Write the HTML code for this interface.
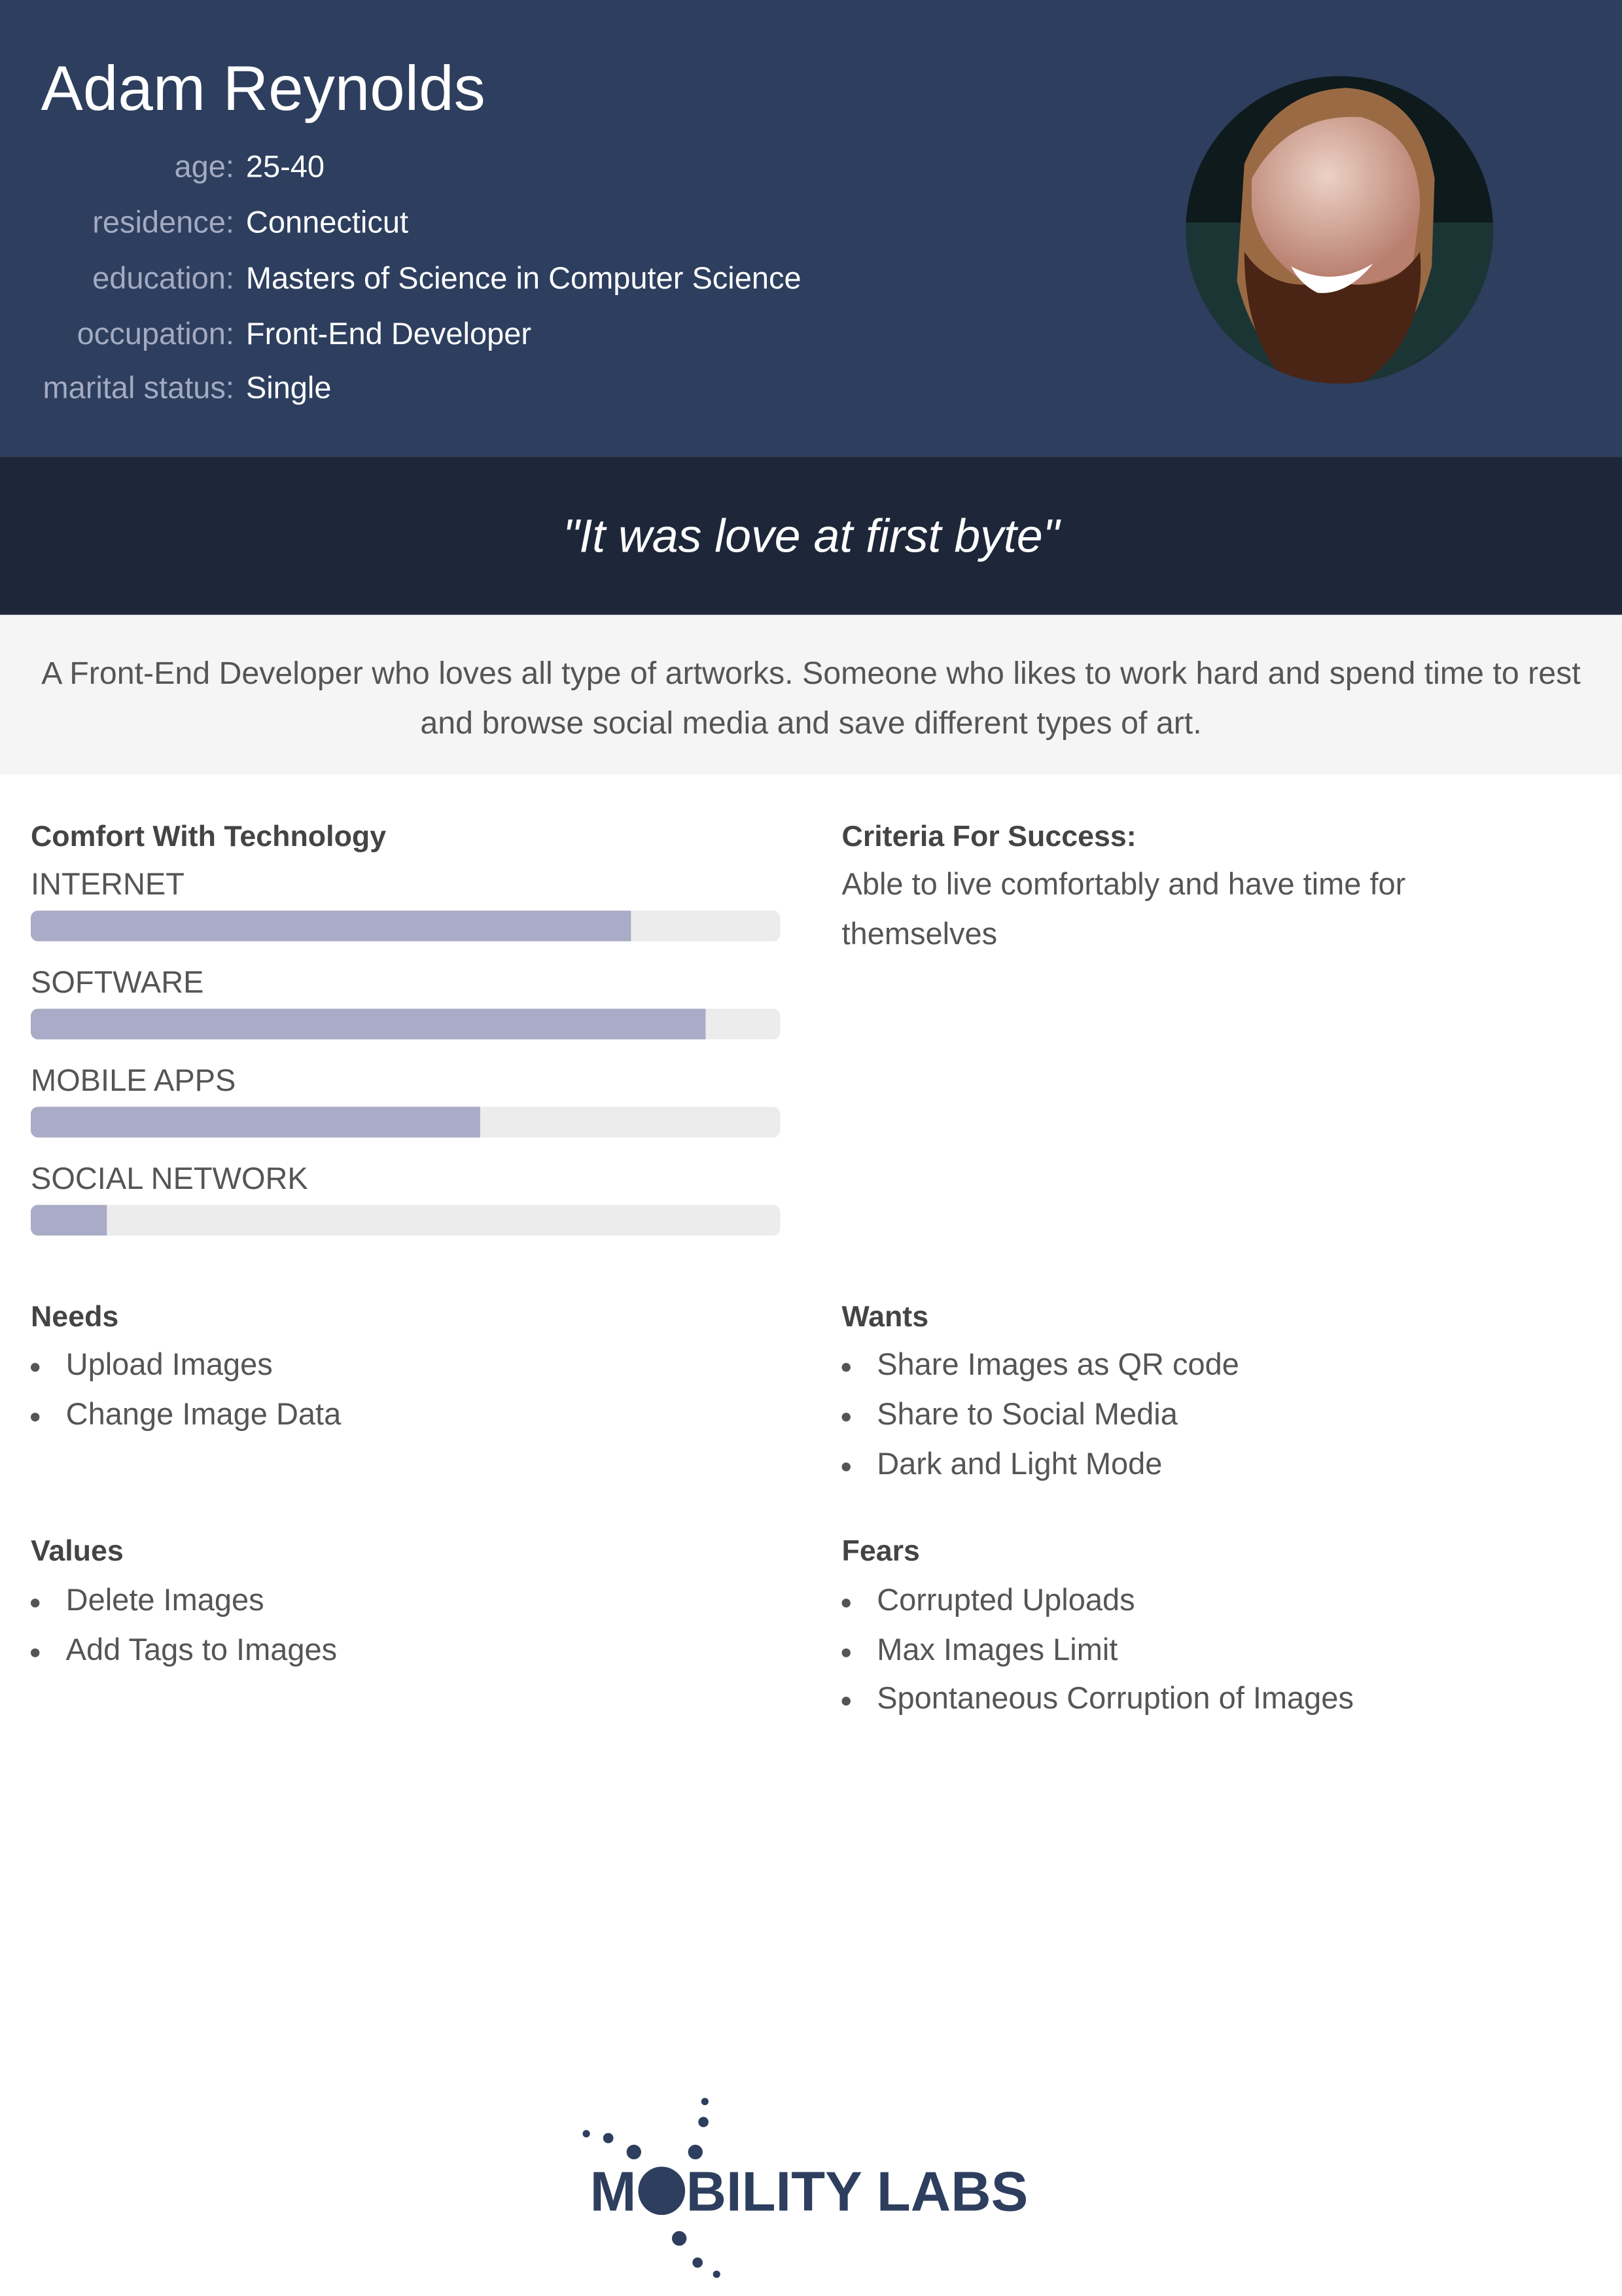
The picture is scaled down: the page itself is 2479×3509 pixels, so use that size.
<!DOCTYPE html>
<html><head><meta charset="utf-8"><style>
html,body{margin:0;padding:0;width:2479px;height:3509px;overflow:hidden;background:#fff}
#s{position:absolute;left:0;top:0;width:1108px;height:1568px;transform:scale(2.2374);transform-origin:0 0;font-family:"Liberation Sans",sans-serif;}
.a{position:absolute;white-space:nowrap}
.lab{position:absolute;right:948px;color:#a3aac2;font-size:21px;line-height:30px;text-align:right}
.val{position:absolute;left:168px;color:#fff;font-size:21px;line-height:30px}
.h{position:absolute;font-weight:bold;color:#444;font-size:20px;line-height:30px}
.t{position:absolute;color:#555;font-size:21px;line-height:30px}
.bar{position:absolute;left:21px;width:512px;height:21px;background:#ececec;border-radius:5px;overflow:hidden}
.bar i{display:block;height:100%;background:#aaabc6}
.li{position:absolute;color:#555;font-size:21px;line-height:30px;padding-left:24px}
.li:before{content:"";position:absolute;left:0;top:13px;width:6px;height:6px;border-radius:50%;background:#555}
.d{position:absolute;background:#2d3e5e;border-radius:50%}
</style></head><body><div id="s">
<div class="a" style="left:0;top:0;width:1108px;height:312px;background:#2d3e5e"></div>
<div class="a" style="left:28px;top:33px;font-size:43px;line-height:56px;color:#fff">Adam Reynolds</div>
<div class="lab" style="top:100px">age:</div><div class="val" style="top:100px">25-40</div>
<div class="lab" style="top:138px">residence:</div><div class="val" style="top:138px">Connecticut</div>
<div class="lab" style="top:176px">education:</div><div class="val" style="top:176px">Masters of Science in Computer Science</div>
<div class="lab" style="top:214px">occupation:</div><div class="val" style="top:214px">Front-End Developer</div>
<div class="lab" style="top:251px">marital status:</div><div class="val" style="top:251px">Single</div>
<svg class="a" style="left:810px;top:52px" width="210" height="210" viewBox="0 0 210 210">
<defs><clipPath id="c"><circle cx="105" cy="105" r="105"/></clipPath>
<radialGradient id="sk" cx="0.45" cy="0.35" r="0.6"><stop offset="0" stop-color="#ecd2c6"/><stop offset="1" stop-color="#b98070"/></radialGradient></defs>
<g clip-path="url(#c)">
<rect width="210" height="210" fill="#0e1a1c"/>
<rect x="0" y="100" width="210" height="110" fill="#1b3534"/>
<path d="M40 60 Q60 10 110 8 Q160 12 170 70 L168 130 Q150 200 95 210 Q50 200 35 140 Z" fill="#9a6a44"/>
<path d="M45 70 Q70 25 120 28 Q160 40 160 90 L155 130 Q120 150 80 140 Q50 120 45 90 Z" fill="url(#sk)"/>
<path d="M40 120 Q60 150 100 140 Q140 150 160 120 Q165 180 120 210 L70 210 Q40 180 40 120Z" fill="#4a2414"/>
<path d="M72 130 Q100 145 128 128 Q110 150 90 148 Q78 142 72 130Z" fill="#fff"/>
<path d="M150 200 L210 160 L210 210 L150 210Z" fill="#1f2a2a"/>
</g></svg>
<div class="a" style="left:0;top:312px;width:1108px;height:108px;background:#1d2739"></div>
<div class="a" style="left:0;top:344px;width:1108px;text-align:center;color:#fff;font-size:32px;line-height:44px;font-style:italic">"It was love at first byte"</div>
<div class="a" style="left:0;top:420px;width:1108px;height:109px;background:#f5f5f5"></div>
<div class="a" style="left:0;top:443px;width:1108px;text-align:center;color:#555;font-size:21.6px;line-height:34px;white-space:normal">A Front-End Developer who loves all type of artworks. Someone who likes to work hard and spend time to rest<br>and browse social media and save different types of art.</div>
<div class="h" style="left:21px;top:557px">Comfort With Technology</div>
<div class="t" style="left:21px;top:590px">INTERNET</div><div class="bar" style="top:622px"><i style="width:410px"></i></div>
<div class="t" style="left:21px;top:657px">SOFTWARE</div><div class="bar" style="top:689px"><i style="width:461px"></i></div>
<div class="t" style="left:21px;top:724px">MOBILE APPS</div><div class="bar" style="top:756px"><i style="width:307px"></i></div>
<div class="t" style="left:21px;top:791px">SOCIAL NETWORK</div><div class="bar" style="top:823px"><i style="width:52px"></i></div>
<div class="h" style="left:575px;top:557px">Criteria For Success:</div>
<div class="t" style="left:575px;top:588px;line-height:34px">Able to live comfortably and have time for<br>themselves</div>
<div class="h" style="left:21px;top:885px">Needs</div>
<div class="li" style="left:21px;top:918px">Upload Images</div>
<div class="li" style="left:21px;top:952px">Change Image Data</div>
<div class="h" style="left:575px;top:885px">Wants</div>
<div class="li" style="left:575px;top:918px">Share Images as QR code</div>
<div class="li" style="left:575px;top:952px">Share to Social Media</div>
<div class="li" style="left:575px;top:986px">Dark and Light Mode</div>
<div class="h" style="left:21px;top:1045px">Values</div>
<div class="li" style="left:21px;top:1079px">Delete Images</div>
<div class="li" style="left:21px;top:1113px">Add Tags to Images</div>
<div class="h" style="left:575px;top:1045px">Fears</div>
<div class="li" style="left:575px;top:1079px">Corrupted Uploads</div>
<div class="li" style="left:575px;top:1113px">Max Images Limit</div>
<div class="li" style="left:575px;top:1146px">Spontaneous Corruption of Images</div>
<div class="a" style="left:403px;top:1477px;font-size:38px;line-height:42px;font-weight:bold;color:#2d3e5e;letter-spacing:0">M<span style="display:inline-block;width:32px;height:33px;border-radius:50%;background:#2d3e5e;vertical-align:-3px;margin:0 1px"></span>BILITY LABS</div>
<div class="d" style="left:398px;top:1455px;width:5px;height:5px"></div>
<div class="d" style="left:412px;top:1457px;width:7px;height:7px"></div>
<div class="d" style="left:428px;top:1465px;width:10px;height:10px"></div>
<div class="d" style="left:479px;top:1433px;width:5px;height:5px"></div>
<div class="d" style="left:477px;top:1446px;width:7px;height:7px"></div>
<div class="d" style="left:470px;top:1465px;width:10px;height:10px"></div>
<div class="d" style="left:459px;top:1524px;width:10px;height:10px"></div>
<div class="d" style="left:473px;top:1542px;width:7px;height:7px"></div>
<div class="d" style="left:487px;top:1551px;width:5px;height:5px"></div>
</div></body></html>
